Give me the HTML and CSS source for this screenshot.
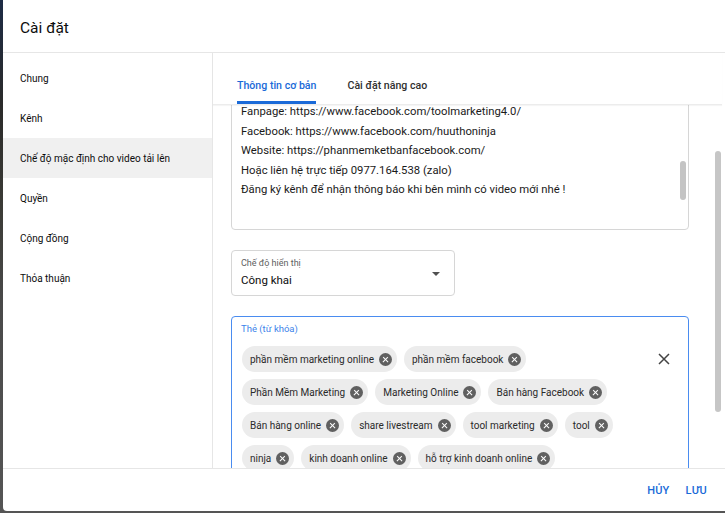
FILE: index.html
```html
<!DOCTYPE html>
<html lang="vi">
<head>
<meta charset="utf-8">
<title>Cài đặt</title>
<link rel="stylesheet" href="styles.css">
</head>
<body>
<div class="dialog">
  <div class="dlg-header">Cài đặt</div>
  <div class="dlg-body">
    <nav class="sidebar">
      <div class="nav-item">Chung</div>
      <div class="nav-item">Kênh</div>
      <div class="nav-item active">Chế độ mặc định cho video tải lên</div>
      <div class="nav-item">Quyền</div>
      <div class="nav-item">Cộng đồng</div>
      <div class="nav-item">Thỏa thuận</div>
    </nav>
    <section class="main">
      <div class="tabs">
        <div class="tab active">Thông tin cơ bản</div>
        <div class="tab">Cài đặt nâng cao</div>
      </div>
      <div class="scroll-wrap">
        <div class="scroll-content">
          <div class="textarea">
            <div class="line">Fanpage: https://www.facebook.com/toolmarketing4.0/</div>
            <div class="line">Facebook: https://www.facebook.com/huuthoninja</div>
            <div class="line">Website: https://phanmemketbanfacebook.com/</div>
            <div class="line">Hoặc liên hệ trực tiếp 0977.164.538 (zalo)</div>
            <div class="line">Đăng ký kênh để nhận thông báo khi bên mình có video mới nhé !</div>
            <div class="ta-thumb"></div>
          </div>
          <div class="select">
            <div class="select-text">
              <div class="select-label">Chế độ hiển thị</div>
              <div class="select-value">Công khai</div>
            </div>
            <div class="caret"></div>
          </div>
          <div class="tags">
            <div class="tags-label">Thẻ (từ khóa)</div>
            <div class="tags-row">
              <div class="chips">
                <span class="chip">phần mềm marketing online<span class="chip-x"></span></span>
                <span class="chip">phần mềm facebook<span class="chip-x"></span></span>
                <span class="chip">Phần Mềm Marketing<span class="chip-x"></span></span>
                <span class="chip">Marketing Online<span class="chip-x"></span></span>
                <span class="chip">Bán hàng Facebook<span class="chip-x"></span></span>
                <span class="chip">Bán hàng online<span class="chip-x"></span></span>
                <span class="chip">share livestream<span class="chip-x"></span></span>
                <span class="chip">tool marketing<span class="chip-x"></span></span>
                <span class="chip">tool<span class="chip-x"></span></span>
                <span class="chip">ninja<span class="chip-x"></span></span>
                <span class="chip">kinh doanh online<span class="chip-x"></span></span>
                <span class="chip">hỗ trợ kinh doanh online<span class="chip-x"></span></span>
              </div>
              <svg class="clear-all" width="12" height="12" viewBox="0 0 12 12"><path d="M1 1L11 11M11 1L1 11" stroke="#444" stroke-width="1.5" fill="none"/></svg>
            </div>
          </div>
        </div>
        <div class="scroll-track"><div class="scroll-thumb"></div></div>
      </div>
    </section>
  </div>
  <div class="dlg-footer">
    <button class="btn">HỦY</button>
    <button class="btn">LƯU</button>
  </div>
</div>
</body>
</html>
```
FILE: styles.css
```css
* { box-sizing: border-box; }
html, body { margin: 0; padding: 0; }
body {
  width: 725px;
  height: 513px;
  overflow: hidden;
  background: linear-gradient(180deg, #1d2b45 0%, #2a2a2a 20%, #3b3b36 40%, #4a4a4a 60%, #555 100%);
  font-family: Roboto, "Noto Sans", Arial, sans-serif;
  color: #0d0d0d;
}
.dialog {
  margin-left: 3px;
  width: 722px;
  height: 511px;
  background: #fff;
  border-radius: 0 0 0 4px;
  display: flex;
  flex-direction: column;
  overflow: hidden;
}
.dlg-header {
  height: 53px;
  flex: none;
  padding-left: 17px;
  padding-top: 3px;
  display: flex;
  align-items: center;
  font-size: 15.5px;
  color: #0d0d0d;
  border-bottom: 1px solid #e6e6e6;
}
.dlg-body {
  flex: 1;
  display: flex;
  min-height: 0;
}
.sidebar {
  width: 210px;
  flex: none;
  border-right: 1px solid #e6e6e6;
  padding-top: 5px;
}
.nav-item {
  height: 40px;
  display: flex;
  align-items: center;
  padding-left: 17px;
  font-size: 10px;
  color: #0d0d0d;
}
.nav-item.active { background: #f0f0f0; }
.main {
  flex: 1;
  display: flex;
  flex-direction: column;
  min-width: 0;
}
.tabs {
  height: 52px;
  flex: none;
  display: flex;
  gap: 31px;
  padding-left: 24px;
  margin-right: 3px;
  border-bottom: 1px solid #ececec;
  box-shadow: 0 1px 1px rgba(0,0,0,0.04);
  position: relative;
  z-index: 1;
}
.tab {
  font-size: 10.6px;
  font-weight: 500;
  color: #303030;
  display: flex;
  align-items: center;
  padding-top: 17px;
  border-bottom: 3px solid transparent;
}
.tab.active {
  color: #1a6ad8;
  border-bottom-color: #1a6ad8;
}
.scroll-wrap {
  flex: 1;
  display: flex;
  min-height: 0;
  overflow: hidden;
}
.scroll-content {
  flex: 1;
  padding-left: 18px;
  padding-right: 25px;
}
.textarea {
  position: relative;
  margin-top: -12px;
  height: 137px;
  border: 1px solid #d6d6d6;
  border-radius: 4px;
  padding: 8px 9px 0;
  font-size: 11.3px;
  line-height: 19.5px;
  color: #1a1a1a;
}
.ta-thumb {
  position: absolute;
  left: 448px;
  top: 67px;
  width: 6px;
  height: 39px;
  border-radius: 3px;
  background: #c4c4c4;
}
.select {
  margin-top: 20px;
  width: 224px;
  height: 46px;
  border: 1px solid #d6d6d6;
  border-radius: 4px;
  display: flex;
  align-items: flex-start;
  justify-content: space-between;
  padding: 6px 14px 0 9px;
}
.select-label {
  font-size: 9px;
  line-height: 12px;
  color: #606060;
}
.select-value {
  font-size: 11.5px;
  line-height: 18px;
  margin-top: 2px;
  color: #0d0d0d;
}
.caret {
  margin-top: 15px;
  width: 0;
  height: 0;
  border-left: 4.5px solid transparent;
  border-right: 4.5px solid transparent;
  border-top: 4.5px solid #505050;
}
.tags {
  margin-top: 20px;
  height: 200px;
  border: 1px solid #4a8cf0;
  border-radius: 4px;
  padding: 6px 0 0 10px;
}
.tags-label {
  font-size: 9.5px;
  line-height: 12px;
  color: #3d84ea;
  margin-left: -1px;
}
.tags-row {
  display: flex;
  margin-top: 11px;
}
.chips {
  width: 405px;
  display: flex;
  flex-wrap: wrap;
  gap: 7px;
}
.chip {
  height: 26px;
  border-radius: 13px;
  background: #ececec;
  display: inline-flex;
  align-items: center;
  padding: 0 5px 0 8px;
  font-size: 10px;
  color: #2a2a2a;
  white-space: nowrap;
}
.chip-x {
  position: relative;
  width: 13px;
  height: 13px;
  border-radius: 50%;
  background: #606060;
  margin-left: 5px;
  flex: none;
}
.chip-x::before, .chip-x::after {
  content: "";
  position: absolute;
  left: 3px;
  top: 6px;
  width: 7px;
  height: 1.4px;
  background: #fff;
  transform: rotate(45deg);
}
.chip-x::after { transform: rotate(-45deg); }
.clear-all {
  margin-left: auto;
  margin-right: 18px;
  margin-top: 7px;
  flex: none;
}
.scroll-track {
  width: 11px;
  flex: none;
  padding-top: 46px;
}
.scroll-thumb {
  width: 6px;
  margin-left: 1px;
  height: 261px;
  border-radius: 3px;
  background: #c6c6c6;
}
.dlg-footer {
  height: 43px;
  flex: none;
  border-top: 1px solid #e6e6e6;
  display: flex;
  justify-content: flex-end;
  align-items: center;
  padding-right: 10px;
  gap: 0;
}
.btn {
  background: none;
  border: 0;
  font-family: Roboto, "Noto Sans", Arial, sans-serif;
  font-size: 11px;
  font-weight: 500;
  color: #1a6ad8;
  padding: 6px 8px;
  letter-spacing: 0.2px;
}
```
